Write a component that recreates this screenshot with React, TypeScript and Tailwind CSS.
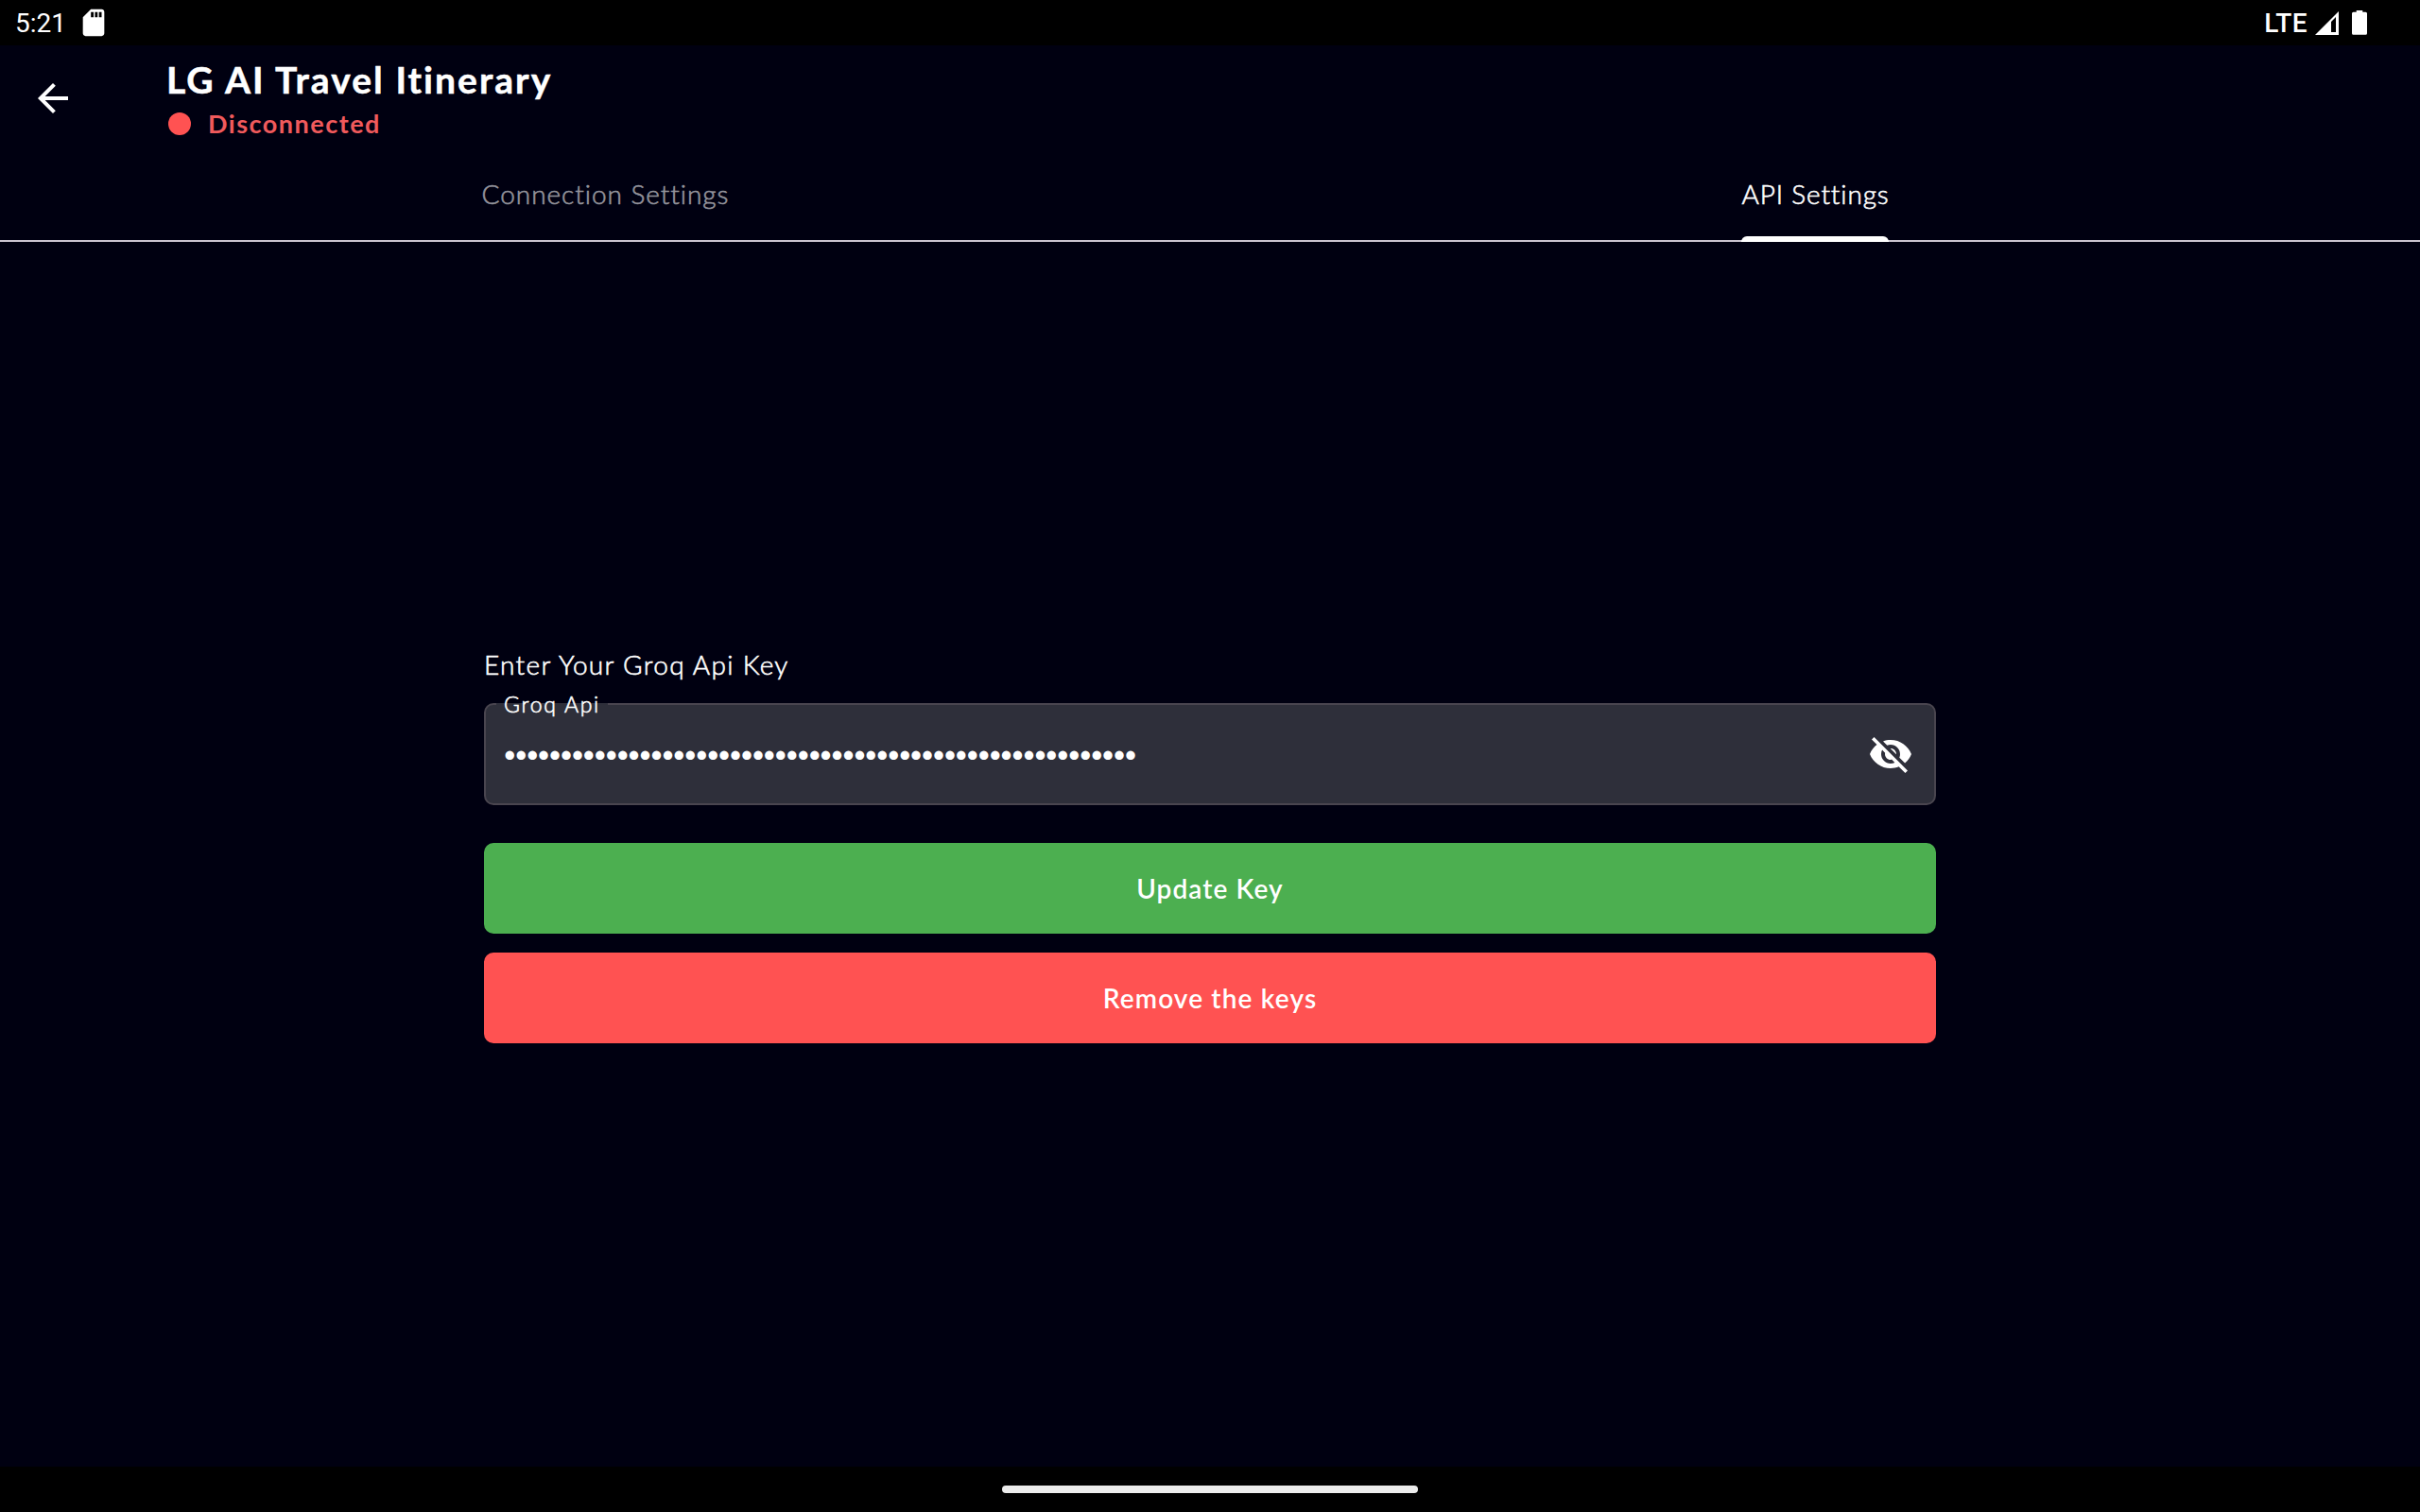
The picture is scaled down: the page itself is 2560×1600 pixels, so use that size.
const light = "font-light [-webkit-text-stroke:0.6px_currentColor]";
const strong = "[-webkit-text-stroke:0.5px_currentColor]";

function StatusBar() {
  return (
    <div className="flex h-12 shrink-0 items-start justify-between bg-black text-white">
      <div className="flex items-start">
        <span className="ml-4 mt-2 w-[66px] font-[Roboto,sans-serif] text-[28px] leading-[34px]">5:21</span>
        <svg className="mt-[7px] size-[34px]" viewBox="0 0 24 24" fill="currentColor">
          <path d="M18 2h-8L4.02 8 4 20c0 1.1.9 2 2 2h12c1.1 0 2-.9 2-2V4c0-1.1-.9-2-2-2zm-6 6h-2V4h2v4zm3 0h-2V4h2v4zm3 0h-2V4h2v4z" />
        </svg>
      </div>
      <div className="flex items-start pr-14">
        <span className="mt-2 mr-2 font-[Roboto,sans-serif] text-[28px] leading-[34px] font-medium tracking-[0.4px]">LTE</span>
        <svg className="mt-3 mr-[14px] h-[25px] w-[25px]" viewBox="0 0 25 25" fill="currentColor">
          <path fillRule="evenodd" d="M25 0v25H0zM22 6l-5 5v11h5z" />
        </svg>
        <svg className="mt-[11px] h-[26px] w-4" viewBox="0 0 16 26" fill="currentColor">
          <path d="M4.7 0h6.6v1.7h3.2A1.5 1.5 0 0 1 16 3.2v21a1.5 1.5 0 0 1-1.5 1.5h-13A1.5 1.5 0 0 1 0 24.2v-21a1.5 1.5 0 0 1 1.5-1.5h3.2z" />
        </svg>
      </div>
    </div>
  );
}

function Header() {
  return (
    <header className="flex h-28 shrink-0 items-start">
      <button className="ml-8 mt-8 size-12 text-white" aria-label="Back">
        <svg className="size-12" viewBox="0 0 24 24" fill="currentColor">
          <path d="M20 11H7.83l5.59-5.59L12 4l-8 8 8 8 1.41-1.41L7.83 13H20v-2z" />
        </svg>
      </button>
      <div className="ml-24 mt-3">
        <h1 className={"text-[39px] leading-[48px] font-bold tracking-[2.05px] whitespace-nowrap " + strong}>LG AI Travel Itinerary</h1>
        <div className="mt-[7px] flex h-8 items-center pl-[2px] text-[#ff5252]">
          <span className="size-6 rounded-full bg-[#ff5252]" />
          <span className="ml-[18px] text-[27px] leading-8 font-bold tracking-[1.5px] text-[#f05a5c]">Disconnected</span>
        </div>
      </div>
    </header>
  );
}

function Tabs() {
  return (
    <nav className="grid h-24 shrink-0 grid-cols-2 border-b-2 border-[#cac4d0] text-[28px]">
      <div className={"flex h-[90px] items-center justify-center pl-[1px] text-[#94949c] " + light}>
        <span className="tracking-[0.95px]">Connection Settings</span>
      </div>
      <div className="flex justify-center">
        <div className={"flex h-24 w-[156px] flex-col " + light}>
          <span className="flex h-[90px] items-center justify-center pl-[1px] tracking-[0.85px] whitespace-nowrap">API Settings</span>
          <span className="relative h-[6px] rounded-t-[6px] bg-white" />
        </div>
      </div>
    </nav>
  );
}

function KeyField() {
  return (
    <div className="relative mt-[25px] flex h-[108px] items-center justify-between rounded-[10px] border-2 border-[#49454f] bg-[#2e2f3a] pr-[22px] pl-[18px]">
      <span className="absolute -top-[2px] left-[11px] h-[2px] w-[118px] bg-[#2e2f3a]" />
      <label className={"absolute -top-[15px] left-[19px] text-[23px] leading-7 tracking-[1.75px] whitespace-nowrap " + light}>Groq Api</label>
      <span className="pb-[3px] text-[25px] leading-8 tracking-[-2.56px]">{"•".repeat(56)}</span>
      <svg className="size-12" viewBox="0 0 24 24" fill="currentColor">
        <path d="M12 7c2.76 0 5 2.24 5 5 0 .65-.13 1.26-.36 1.83l2.92 2.92c1.51-1.26 2.7-2.89 3.43-4.75-1.73-4.39-6-7.5-11-7.5-1.4 0-2.74.25-3.98.7l2.16 2.16C10.74 7.13 11.35 7 12 7zM2 4.27l2.28 2.28.46.46C3.08 8.3 1.78 10.02 1 12c1.73 4.39 6 7.5 11 7.5 1.55 0 3.03-.3 4.38-.84l.42.42L19.73 22 21 20.73 3.27 3 2 4.27zM7.53 9.8l1.55 1.55c-.05.21-.08.43-.08.65 0 1.66 1.34 3 3 3 .22 0 .44-.03.65-.08l1.55 1.55c-.67.33-1.41.53-2.2.53-2.76 0-5-2.24-5-5 0-.79.2-1.53.53-2.2zm4.31-.78l3.15 3.15.02-.16c0-1.66-1.34-3-3-3l-.17.01z" />
      </svg>
    </div>
  );
}

export default function App() {
  return (
    <div className="flex h-[1600px] w-[2560px] flex-col overflow-hidden bg-[#000011] font-[Lato,sans-serif] text-white [font-variant-ligatures:none]">
      <StatusBar />
      <Header />
      <Tabs />
      <main className="flex flex-1 flex-col px-[512px] pt-[431px]">
        <p className={"text-[28px] leading-8 tracking-[1.32px] " + light}>Enter Your Groq Api Key</p>
        <KeyField />
        <button className="mt-10 h-24 rounded-[10px] bg-[#4caf50] pb-px text-[28px] font-semibold tracking-[1.1px]">Update Key</button>
        <button className="mt-5 h-24 rounded-[10px] bg-[#ff5252] pb-px text-[28px] font-semibold tracking-[1.15px]">Remove the keys</button>
      </main>
      <footer className="flex h-12 shrink-0 items-start justify-center bg-black pt-5">
        <span className="h-2 w-[440px] rounded-full bg-[#ececec]" />
      </footer>
    </div>
  );
}
